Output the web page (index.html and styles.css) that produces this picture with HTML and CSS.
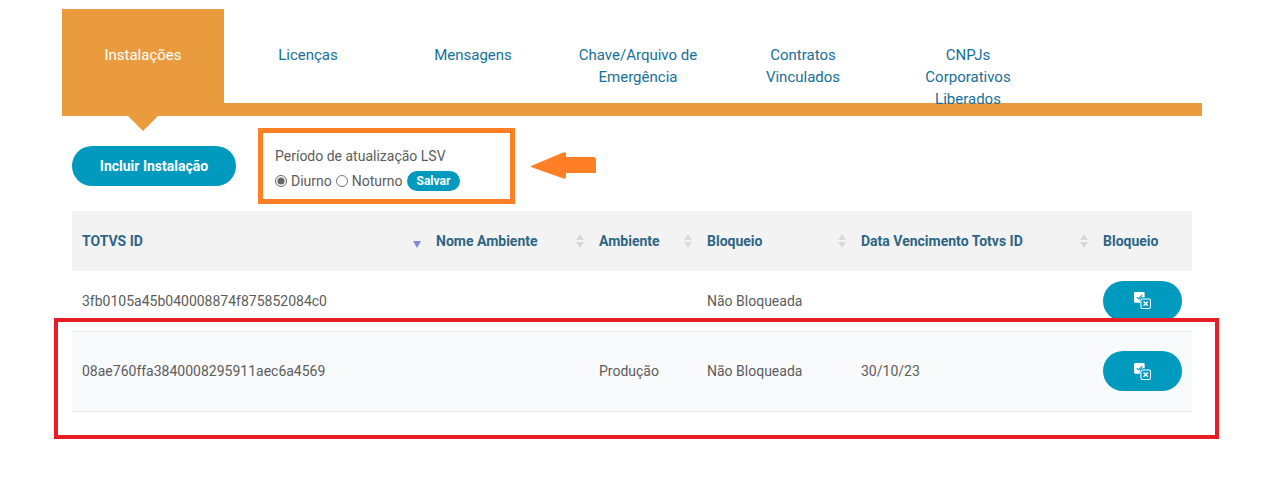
FILE: index.html
```
<!DOCTYPE html>
<html lang="pt-BR">
<head>
    <meta charset="UTF-8">
    <meta name="viewport" content="width=device-width, initial-scale=1.0">
    <title>Instalações</title>
    <link rel="stylesheet" href="styles.css">
</head>
<body>
    <!-- shared icons -->
    <svg class="sprite" aria-hidden="true">
        <symbol id="sort" viewBox="0 0 8 14">
            <path d="M4 0L8 6H0zM0 8H8L4 14z"/>
        </symbol>
        <symbol id="sort-desc" viewBox="0 0 8 14">
            <path d="M0 7H8L4 14z"/>
        </symbol>
        <symbol id="block" viewBox="0 0 16 16">
            <path d="M1 0H9Q10 0 10 1V5H7Q5.500 5 5.500 6.500V10H1Q0 10 0 9V1Q0 0 1 0Z" fill="#fff"/>
            <path d="M2.500 4.800L4.200 6.300L7.800 3" fill="none" stroke="#009abf"/>
            <rect x="6.500" y="6.500" width="9" height="9" rx="1.500" fill="none" stroke="#fff"/>
            <path d="M9 9L13 13M13 9L9 13" stroke="#fff" stroke-width="1.300"/>
        </symbol>
    </svg>

    <div class="container">
        <nav>
            <ul class="tabs">
                <li><a class="active" href="#instalacoes">Instalações</a></li>
                <li><a href="#licencas">Licenças</a></li>
                <li><a href="#mensagens">Mensagens</a></li>
                <li><a href="#chave">Chave/Arquivo de Emergência</a></li>
                <li><a href="#contratos">Contratos Vinculados</a></li>
                <li><a href="#cnpjs">CNPJs Corporativos Liberados</a></li>
            </ul>
        </nav>

        <main class="content">
            <div class="toolbar">
                <button type="button" class="btn btn-add">Incluir Instalação</button>
                <form class="period">
                    <fieldset>
                        <legend>Período de atualização LSV</legend>
                        <div class="period-options">
                            <input type="radio" id="diurno" name="periodo" checked>
                            <label for="diurno">Diurno</label>
                            <input type="radio" id="noturno" name="periodo">
                            <label for="noturno">Noturno</label>
                            <button type="button" class="btn btn-save">Salvar</button>
                        </div>
                    </fieldset>
                </form>
                <svg class="arrow" viewBox="0 0 66 28" aria-hidden="true">
                    <path d="M0 14L31 1Q35 -1 35 2V5H62Q65 5 65 8V21H35V25Q35 28 31 26L0 15Z"/>
                </svg>
            </div>

            <div class="table-wrap">
                <table>
                    <colgroup>
                        <col class="col-id">
                        <col class="col-nome">
                        <col class="col-ambiente">
                        <col class="col-bloqueio">
                        <col class="col-data">
                        <col class="col-acao">
                    </colgroup>
                    <thead>
                        <tr>
                            <th><div class="head">TOTVS ID <svg class="sort sorted"><use href="#sort-desc"/></svg></div></th>
                            <th><div class="head">Nome Ambiente <svg class="sort"><use href="#sort"/></svg></div></th>
                            <th><div class="head">Ambiente <svg class="sort"><use href="#sort"/></svg></div></th>
                            <th><div class="head">Bloqueio <svg class="sort"><use href="#sort"/></svg></div></th>
                            <th><div class="head">Data Vencimento Totvs ID <svg class="sort"><use href="#sort"/></svg></div></th>
                            <th><div class="head">Bloqueio</div></th>
                        </tr>
                    </thead>
                    <tbody>
                        <tr>
                            <td>3fb0105a45b040008874f875852084c0</td>
                            <td></td>
                            <td></td>
                            <td>Não Bloqueada</td>
                            <td></td>
                            <td><button type="button" class="btn btn-block" aria-label="Bloqueio"><svg><use href="#block"/></svg></button></td>
                        </tr>
                        <tr class="selected">
                            <td>08ae760ffa3840008295911aec6a4569</td>
                            <td></td>
                            <td>Produção</td>
                            <td>Não Bloqueada</td>
                            <td>30/10/23</td>
                            <td><button type="button" class="btn btn-block" aria-label="Bloqueio"><svg><use href="#block"/></svg></button></td>
                        </tr>
                    </tbody>
                </table>
                <div class="highlight"></div>
            </div>
        </main>
    </div>
</body>
</html>
```
FILE: styles.css
```
* {
    box-sizing: border-box;
}
body {
    font-family: Roboto, Arial, sans-serif;
    font-size: 14px;
    margin: 0;
    padding: 0;
    background-color: #fff;
    color: #5c5c5c;
}
.sprite {
    display: none;
}
.container {
    padding: 9px 78px 47px 62px;
}

/* Tabs */
.tabs {
    display: grid;
    grid-template-columns: repeat(6, 162px);
    column-gap: 3px;
    height: 107px;
    margin: 0;
    padding: 0;
    list-style: none;
    border-bottom: 13px solid #e99b3e;
}
.tabs a {
    display: block;
    height: 94px;
    padding: 35px 20px 0;
    color: #16709a;
    font-size: 15px;
    line-height: 22px;
    text-align: center;
    text-decoration: none;
}
.tabs a.active {
    position: relative;
    background: #e99b3e;
    color: #fff;
}
/* Pointer under the active tab */
.tabs a.active::after {
    content: "";
    position: absolute;
    top: 106px;
    left: 50%;
    margin-left: -16px;
    border: 16px solid transparent;
    border-top-color: #e99b3e;
    border-bottom: 0;
}

.content {
    padding: 12px 10px 0;
}
.toolbar {
    display: flex;
    align-items: center;
    margin-bottom: 7px;
}
.btn {
    border: none;
    border-radius: 20px;
    background: #009abf;
    color: #fff;
    font-family: inherit;
    font-weight: bold;
    cursor: pointer;
}
.btn-add {
    width: 164px;
    height: 40px;
    font-size: 14px;
}
.period {
    width: 257px;
    height: 76px;
    margin-left: 22px;
    padding: 12px;
    border: 5px solid #ff7f27;
}
.period fieldset {
    margin: 0;
    padding: 0;
    border: none;
}
.period legend {
    padding: 0;
    line-height: 22px;
}
.period-options {
    display: flex;
    align-items: center;
    height: 28px;
}
.period input {
    width: 12px;
    height: 12px;
    margin: 0 4px 0 0;
    accent-color: #666;
}
.period label {
    margin-right: 4px;
}
.btn-save {
    height: 20px;
    padding: 0 10px;
    font-size: 12px;
}
.arrow {
    width: 66px;
    height: 28px;
    margin-left: 16px;
    fill: #ff7f27;
}

/* Table */
.table-wrap {
    position: relative;
    padding-bottom: 27px;
}
table {
    width: 100%;
    table-layout: fixed;
    border-collapse: collapse;
}
.col-id { width: 354px; }
.col-nome { width: 163px; }
.col-ambiente { width: 108px; }
.col-bloqueio { width: 154px; }
.col-data { width: 242px; }
.col-acao { width: 99px; }
th {
    height: 60px;
    padding: 0 5px 0 10px;
    background: #f3f3f3;
    color: #2c6685;
    text-align: left;
}
.head {
    display: flex;
    justify-content: space-between;
    align-items: center;
}
.sort {
    width: 8px;
    height: 14px;
    fill: #d9d9d9;
}
.sorted {
    fill: #8585dc;
}
td {
    height: 60px;
    padding: 0 10px;
}
.selected td {
    height: 80px;
    background: #f9fafc;
    border-top: 1px solid #e6e9ed;
    border-bottom: 1px solid #e6e9ed;
}
.btn-block {
    display: flex;
    align-items: center;
    justify-content: center;
    width: 100%;
    height: 40px;
    padding: 0;
}
.btn-block svg {
    width: 17px;
    height: 17px;
}
/* Frame over the selected row */
.highlight {
    position: absolute;
    top: 107px;
    bottom: 0;
    left: -18px;
    right: -27px;
    border: 4px solid #e81c24;
    pointer-events: none;
}
```
